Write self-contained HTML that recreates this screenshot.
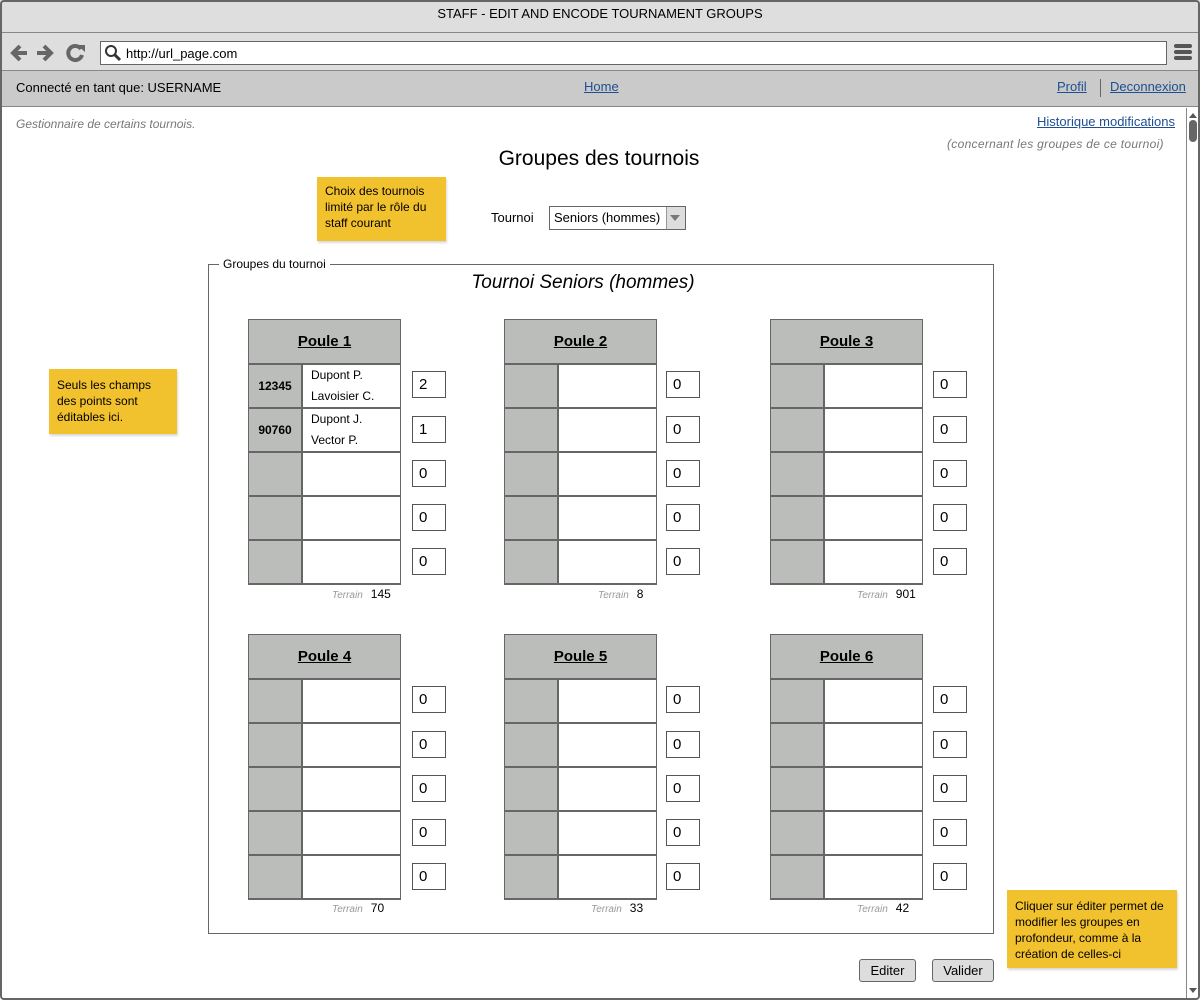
<!DOCTYPE html>
<html><head><meta charset="utf-8"><style>
*{margin:0;padding:0;box-sizing:border-box}
body{width:1200px;height:1000px;position:relative;background:#fff;font-family:"Liberation Sans",sans-serif;font-size:13px;color:#000;overflow:hidden}
.a{position:absolute}
.frame{left:0;top:0;width:1200px;height:1000px;border:2px solid #666;border-radius:4px}
.p{position:absolute;width:153px;border:1px solid #666;border-bottom:2px solid #666;background:#bbbdba}
.p .h{height:43px;text-align:center;line-height:43px;font-weight:bold;font-size:15px;text-decoration:underline}
.p .r{height:44px;border-top:2px solid #666;display:flex}
.p .r .g{width:52px;font-weight:bold;font-size:12px;line-height:42px;text-align:center}
.p .r .w{flex:1;background:#fff;border-left:2px solid #666;font-size:12px;padding-left:8px;line-height:21px}
.s{position:absolute;width:34px;height:27px;border:1px solid #555;background:#fff;font-size:15px;padding-left:6px;line-height:25px}
.t{position:absolute;font-size:12px}
.t i{color:#999;font-size:10px;margin-right:8px}
.note{position:absolute;background:#f2c12e;font-size:12px;line-height:16px;padding:8px;box-shadow:1px 2px 2px rgba(0,0,0,.15)}
a{color:#1d4f91;text-decoration:underline}
.btn{position:absolute;height:23px;border:1px solid #666;background:#ddd;border-radius:3px;font-size:13px;text-align:center;line-height:21px}
</style></head><body>
<div class="a" style="left:0;top:0;width:1200px;height:70px;background:#dedede"></div>
<div class="a" style="left:0;top:32px;width:1200px;height:1px;background:#888"></div>
<div class="a" style="left:0;top:70px;width:1200px;height:37px;background:#cacaca;border-top:1px solid #888;border-bottom:1px solid #888"></div>
<div class="a" style="left:0;top:6px;width:1200px;text-align:center;font-size:13px">STAFF - EDIT AND ENCODE TOURNAMENT GROUPS</div>
<svg class="a" style="left:10px;top:42px" width="80" height="22" viewBox="0 0 80 22"><path d="M3 11h14M10 4l-7 7 7 7" stroke="#666" stroke-width="4" fill="none"/><path d="M27 11h14M34 4l7 7-7 7" stroke="#666" stroke-width="4" fill="none"/><path d="M71 7a7 7 0 1 0 1 6" stroke="#666" stroke-width="4" fill="none"/><path d="M67 3l8 0 0 7z" fill="#666"/></svg>
<div class="a" style="left:100px;top:41px;width:1067px;height:24px;background:#fff;border:1px solid #666"></div>
<svg class="a" style="left:104px;top:44px" width="18" height="18"><circle cx="7" cy="7" r="5" stroke="#333" stroke-width="2" fill="none"/><path d="M11 11l5 5" stroke="#333" stroke-width="3"/></svg>
<div class="a" style="left:126px;top:46px;font-size:13px">http://url_page.com</div>
<div class="a" style="left:1174px;top:44px;width:18px;height:4px;background:#555;border-radius:2px;box-shadow:0 6px 0 #555,0 12px 0 #555"></div>
<div class="a" style="left:16px;top:80px">Connecté en tant que: USERNAME</div>
<a class="a" style="left:584px;top:79px">Home</a>
<a class="a" style="left:1057px;top:79px">Profil</a>
<div class="a" style="left:1100px;top:79px;width:1px;height:18px;background:#666"></div>
<a class="a" style="left:1110px;top:79px">Deconnexion</a>
<div class="a" style="left:1186px;top:108px;width:14px;height:890px;border-left:1px solid #888;background:#fff"></div>
<div class="a" style="left:1189px;top:113px;border:4px solid transparent;border-bottom:5px solid #555;border-top:0"></div>
<div class="a" style="left:1189px;top:120px;width:8px;height:22px;background:#666;border-radius:4px"></div>
<div class="a" style="left:1189px;top:988px;border:4px solid transparent;border-top:5px solid #555;border-bottom:0"></div>
<div class="a" style="left:16px;top:117px;font-size:12px;font-style:italic;color:#777">Gestionnaire de certains tournois.</div>
<a class="a" style="left:1037px;top:114px">Historique modifications</a>
<div class="a" style="left:947px;top:137px;font-size:12px;font-style:italic;color:#777;letter-spacing:0.3px">(concernant les groupes de ce tournoi)</div>
<div class="a" style="left:0;top:147px;width:1198px;text-align:center;font-size:21px">Groupes des tournois</div>
<div class="note" style="left:317px;top:177px;width:129px;height:64px;padding-top:6px">Choix des tournois limité par le rôle du staff courant</div>
<div class="a" style="left:491px;top:210px">Tournoi</div>
<div class="a" style="left:549px;top:206px;width:137px;height:24px;border:1px solid #666;background:#fff;font-size:13px;padding-left:4px;line-height:22px">Seniors (hommes)</div>
<div class="a" style="left:666px;top:207px;width:19px;height:22px;background:#ddd;border-left:1px solid #999"></div>
<div class="a" style="left:670px;top:215px;border:5px solid transparent;border-top:6px solid #777"></div>
<div class="note" style="left:49px;top:369px;width:128px;height:65px">Seuls les champs des points sont éditables ici.</div>
<div class="a" style="left:208px;top:264px;width:786px;height:670px;border:1px solid #666"></div>
<div class="a" style="left:219px;top:257px;background:#fff;padding:0 4px;font-size:12px">Groupes du tournoi</div>
<div class="a" style="left:190px;top:272px;width:786px;text-align:center;font-size:19px;font-style:italic">Tournoi Seniors (hommes)</div>

<div class="p" style="left:248px;top:319px"><div class="h">Poule 1</div>
<div class="r"><div class="g">12345</div><div class="w">Dupont P.<br>Lavoisier C.</div></div>
<div class="r"><div class="g">90760</div><div class="w">Dupont J.<br>Vector P.</div></div>
<div class="r"><div class="g"></div><div class="w"></div></div><div class="r"><div class="g"></div><div class="w"></div></div><div class="r"><div class="g"></div><div class="w"></div></div></div>
<div class="p" style="left:504px;top:319px"><div class="h">Poule 2</div>
<div class="r"><div class="g"></div><div class="w"></div></div><div class="r"><div class="g"></div><div class="w"></div></div><div class="r"><div class="g"></div><div class="w"></div></div><div class="r"><div class="g"></div><div class="w"></div></div><div class="r"><div class="g"></div><div class="w"></div></div></div>
<div class="p" style="left:770px;top:319px"><div class="h">Poule 3</div>
<div class="r"><div class="g"></div><div class="w"></div></div><div class="r"><div class="g"></div><div class="w"></div></div><div class="r"><div class="g"></div><div class="w"></div></div><div class="r"><div class="g"></div><div class="w"></div></div><div class="r"><div class="g"></div><div class="w"></div></div></div>
<div class="p" style="left:248px;top:634px"><div class="h">Poule 4</div>
<div class="r"><div class="g"></div><div class="w"></div></div><div class="r"><div class="g"></div><div class="w"></div></div><div class="r"><div class="g"></div><div class="w"></div></div><div class="r"><div class="g"></div><div class="w"></div></div><div class="r"><div class="g"></div><div class="w"></div></div></div>
<div class="p" style="left:504px;top:634px"><div class="h">Poule 5</div>
<div class="r"><div class="g"></div><div class="w"></div></div><div class="r"><div class="g"></div><div class="w"></div></div><div class="r"><div class="g"></div><div class="w"></div></div><div class="r"><div class="g"></div><div class="w"></div></div><div class="r"><div class="g"></div><div class="w"></div></div></div>
<div class="p" style="left:770px;top:634px"><div class="h">Poule 6</div>
<div class="r"><div class="g"></div><div class="w"></div></div><div class="r"><div class="g"></div><div class="w"></div></div><div class="r"><div class="g"></div><div class="w"></div></div><div class="r"><div class="g"></div><div class="w"></div></div><div class="r"><div class="g"></div><div class="w"></div></div></div>

<div class="s" style="left:412px;top:371px">2</div><div class="s" style="left:412px;top:416px">1</div><div class="s" style="left:412px;top:460px">0</div><div class="s" style="left:412px;top:504px">0</div><div class="s" style="left:412px;top:548px">0</div>
<div class="s" style="left:666px;top:371px">0</div><div class="s" style="left:666px;top:416px">0</div><div class="s" style="left:666px;top:460px">0</div><div class="s" style="left:666px;top:504px">0</div><div class="s" style="left:666px;top:548px">0</div>
<div class="s" style="left:933px;top:371px">0</div><div class="s" style="left:933px;top:416px">0</div><div class="s" style="left:933px;top:460px">0</div><div class="s" style="left:933px;top:504px">0</div><div class="s" style="left:933px;top:548px">0</div>
<div class="s" style="left:412px;top:686px">0</div><div class="s" style="left:412px;top:731px">0</div><div class="s" style="left:412px;top:775px">0</div><div class="s" style="left:412px;top:819px">0</div><div class="s" style="left:412px;top:863px">0</div>
<div class="s" style="left:666px;top:686px">0</div><div class="s" style="left:666px;top:731px">0</div><div class="s" style="left:666px;top:775px">0</div><div class="s" style="left:666px;top:819px">0</div><div class="s" style="left:666px;top:863px">0</div>
<div class="s" style="left:933px;top:686px">0</div><div class="s" style="left:933px;top:731px">0</div><div class="s" style="left:933px;top:775px">0</div><div class="s" style="left:933px;top:819px">0</div><div class="s" style="left:933px;top:863px">0</div>

<div class="t" style="left:332px;top:587px"><i>Terrain</i>145</div>
<div class="t" style="left:598px;top:587px"><i>Terrain</i>8</div>
<div class="t" style="left:857px;top:587px"><i>Terrain</i>901</div>
<div class="t" style="left:332px;top:901px"><i>Terrain</i>70</div>
<div class="t" style="left:591px;top:901px"><i>Terrain</i>33</div>
<div class="t" style="left:857px;top:901px"><i>Terrain</i>42</div>

<div class="note" style="left:1007px;top:890px;width:170px;height:78px;font-size:12px">Cliquer sur éditer permet de modifier les groupes en profondeur, comme à la création de celles-ci</div>
<div class="btn" style="left:859px;top:959px;width:57px">Editer</div>
<div class="btn" style="left:932px;top:959px;width:62px">Valider</div>
<div class="a frame"></div>
</body></html>
